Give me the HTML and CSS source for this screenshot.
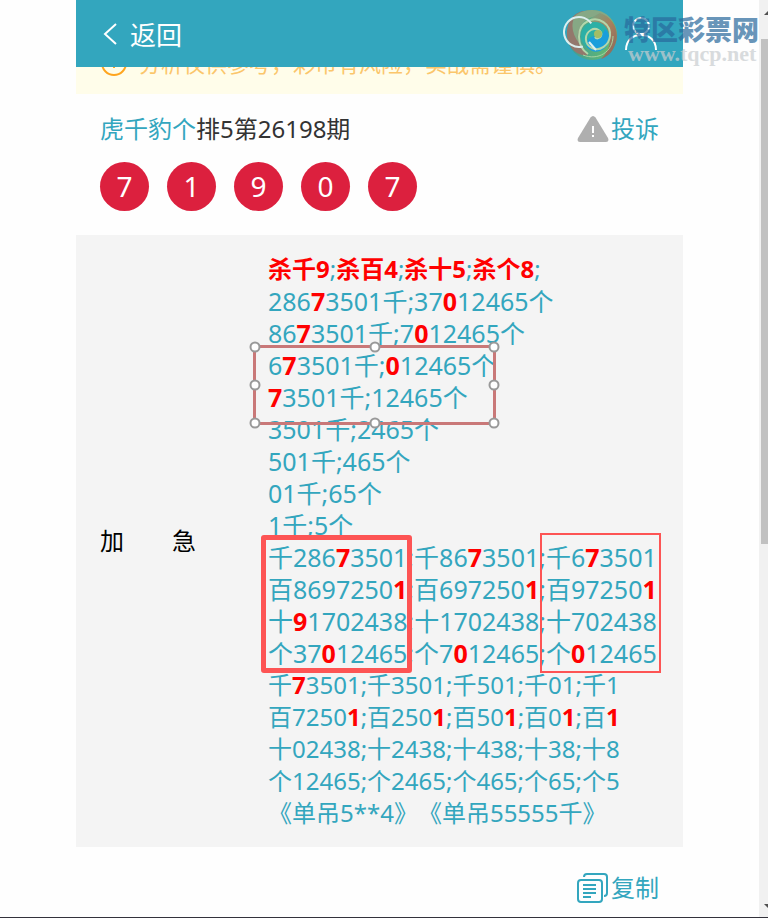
FILE: index.html
```html
<!DOCTYPE html>
<html lang="zh-CN">
<head>
  <meta charset="utf-8">
  <title>排5第26198期</title>
  <link rel="stylesheet" href="styles.css">
</head>
<body>

  <div class="window">
    <div class="page">
      <header class="topbar">
        <a class="back" href="#">
          <svg width="14" height="22" viewBox="0 0 14 22" fill="none" stroke="#fff" stroke-width="2"><path d="M13 1L2 11l11 10"/></svg>
          返回
        </a>
        <button class="user" aria-label="我的">
          <svg width="32" height="34" viewBox="0 0 32 34" fill="none" stroke="#fff" stroke-width="2"><circle cx="16" cy="9" r="8"/><path d="M1 33c0-10 7-15 15-15s15 5 15 15"/></svg>
        </button>
        <div class="watermark">
          <svg width="56" height="54" viewBox="0 0 56 54" fill="none">
            <defs>
              <linearGradient id="warm" x1="0" y1="0" x2="1" y2="1">
                <stop offset="0" stop-color="#6fae8c"/>
                <stop offset="0.5" stop-color="#a8805e"/>
                <stop offset="1" stop-color="#84685c"/>
              </linearGradient>
              <linearGradient id="green" x1="0" y1="0" x2="1" y2="0">
                <stop offset="0" stop-color="#3d9a9a"/>
                <stop offset="1" stop-color="#6cc068"/>
              </linearGradient>
            </defs>
            <circle cx="29" cy="27" r="25" fill="url(#green)"/>
            <path d="M8 11C1 22 3 38 14 45c4 2 8 3 11 2-9-7-12-20-7-30 3-6 9-10 16-11C24 0 14 3 8 11z" fill="#93786c"/>
            <path d="M13 7C24-1 43 0 50 14c-8-7-20-8-28-1-6 5-9 14-6 22-7-9-9-20-3-28z" fill="#86a885"/>
            <path d="M37 5c15 5 20 20 15 32-3 8-8 12-14 14 8-8 11-18 7-27C41 16 32 12 24 15c3-5 9-8 13-10z" fill="url(#warm)"/>
            <circle cx="32" cy="28" r="14" fill="#2cb0a6"/>
            <path d="M24 39c-1-7 3-11 9-11 5 0 8-3 9-7 7 6 5 17-3 21-5 3-11 2-15-3z" fill="#1a9edb"/>
            <path d="M25 46C13 38 13 19 25 13c11-5 23 3 22 15-1 9-10 16-18 12-8-4-8-14-1-18 5-3 12 1 10 6-1 3-5 3-6 1" stroke="#b4d6aa" stroke-width="2"/>
            <path d="M20 47c15 6 30-3 30-19" stroke="#a9d3a0" stroke-width="1"/>
            <circle cx="35" cy="26" r="4" fill="#a3bd65"/>
            <circle cx="16" cy="24" r="15" stroke="#dcefef" stroke-width="2" stroke-dasharray="65 30" transform="rotate(75 16 24)"/>
            <path d="M26 34l7 8" stroke="#dcefef" stroke-width="2"/>
          </svg>
          <div class="brand">
            <strong>特区彩票网</strong>
            <span>www.tqcp.net</span>
          </div>
        </div>
      </header>

      <div class="notice">
        <svg width="28" height="28" viewBox="0 0 28 28" fill="none" stroke="#ffa51e" stroke-width="2"><circle cx="14" cy="14" r="12"/><path d="M14 7v2M14 12v7"/></svg>
        <span>分析仅供参考，彩市有风险，实战需谨慎。</span>
      </div>

      <section class="issue">
        <div class="issue-title">
          <h1><a href="#">虎千豹个</a>排5第26198期</h1>
          <button class="action">
            <svg width="32" height="26" viewBox="0 0 32 26"><path d="M13.500 1.500q2.500-3 5 0L31 22q1.500 4-2 4H3q-3.500 0-2-4z" fill="#afafaf"/><path d="M16 10v7M16 19v2" stroke="#fff" stroke-width="2"/></svg>
            投诉
          </button>
        </div>
        <div class="balls">
          <span>7</span><span>1</span><span>9</span><span>0</span><span>7</span>
        </div>
      </section>

      <section class="plan">
        <div class="author"><span>加</span><span>急</span></div>
        <div class="detail">
          <p><b>杀千9</b>;<b>杀百4</b>;<b>杀十5</b>;<b>杀个8</b>;</p>
          <div class="numbers">
            <p>286<b>7</b>3501千;37<b>0</b>12465个</p>
            <p>86<b>7</b>3501千;7<b>0</b>12465个</p>
            <p>6<b>7</b>3501千;<b>0</b>12465个</p>
            <p><b>7</b>3501千;12465个</p>
            <p>3501千;2465个</p>
            <p>501千;465个</p>
            <p>01千;65个</p>
            <p>1千;5个</p>
            <p>千286<b>7</b>3501;千86<b>7</b>3501;千6<b>7</b>3501</p>
            <p>百8697250<b>1</b>;百697250<b>1</b>;百97250<b>1</b></p>
            <p>十<b>9</b>1702438;十1702438;十702438</p>
            <p>个37<b>0</b>12465;个7<b>0</b>12465;个<b>0</b>12465</p>
          </div>
          <p>千<b>7</b>3501;千3501;千501;千01;千1</p>
          <p>百7250<b>1</b>;百250<b>1</b>;百50<b>1</b>;百0<b>1</b>;百<b>1</b></p>
          <p>十02438;十2438;十438;十38;十8</p>
          <p>个12465;个2465;个465;个65;个5</p>
          <p>《单吊5**4》《单吊55555千》</p>

          <div class="mark mark-selected">
            <i></i><i></i><i></i><i></i><i></i><i></i><i></i><i></i>
          </div>
          <div class="mark mark-thick"></div>
          <div class="mark mark-thin"></div>
        </div>
      </section>

      <div class="footer">
        <button class="action">
          <svg width="32" height="30" viewBox="0 0 32 30" fill="none" stroke="#33a6be" stroke-width="2"><rect x="1" y="7" width="24" height="22" rx="3"/><path d="M7 4q0-3 3-3h17q3 0 3 3v16q0 3-3 3M6 12h13M6 16h13M6 20h13M6 24h8"/></svg>
          复制
        </button>
      </div>
    </div>

    <div class="scrollbar">
      <svg width="7" height="5" viewBox="0 0 7 5" fill="#505050"><path d="M3 5l4-4v4z"/></svg>
      <div class="thumb"></div>
      <svg width="7" height="5" viewBox="0 0 7 5" fill="#505050"><path d="M3 0h4v4z"/></svg>
    </div>
  </div>

</body>
</html>
```
FILE: styles.css
```css
* {
  box-sizing: border-box;
}

body {
  margin: 0;
  background-color: #fefefe;
  font-family: "Noto Sans", "Noto Sans CJK SC", sans-serif;
  font-size: 24px;
  color: #333;
  text-spacing-trim: space-all;
}

h1, p {
  margin: 0;
  font-size: inherit;
  font-weight: normal;
}

a {
  color: #33a6be;
  text-decoration: none;
}

button {
  padding: 0;
  border: none;
  background: none;
  font: inherit;
  color: #33a6be;
}

svg {
  display: block;
  flex: none;
}

.window {
  display: flex;
  min-height: 100vh;
  border-bottom: 1px solid #33323c;
}

.page {
  flex: 1;
  padding: 0 76px;
}

.topbar {
  position: relative;
  display: flex;
  justify-content: space-between;
  align-items: center;
  height: 67px;
  padding: 0 26px 0 27px;
  background-color: #33a6be;
}

.back {
  display: flex;
  align-items: center;
  gap: 13px;
  font-size: 26px;
  color: #fff;
}

.watermark {
  position: absolute;
  top: 8px;
  right: -76px;
  display: flex;
  gap: 5px;
}

.brand {
  display: flex;
  flex-direction: column;
  padding-top: 8px;
}

.brand strong {
  font-size: 27px;
  font-weight: 900;
  line-height: 28px;
  color: #296a9c;
  opacity: 0.7;
}

.brand span {
  padding-left: 4px;
  font-family: "Liberation Serif", serif;
  font-size: 22px;
  font-weight: bold;
  line-height: 20px;
  color: #c9cdd0;
  opacity: 0.7;
}

.notice {
  display: flex;
  align-items: flex-end;
  gap: 11px;
  height: 27px;
  padding: 0 24px 17px;
  overflow: hidden;
  background-color: #fffdea;
  font-size: 22px;
  line-height: 28px;
  color: #fbc66b;
}

.notice span {
  white-space: nowrap;
}

.issue {
  padding: 17px 24px 24px;
}

.issue-title {
  display: flex;
  justify-content: space-between;
  line-height: 36px;
}

.action {
  display: flex;
  align-items: center;
  gap: 2px;
  line-height: 36px;
}

.balls {
  display: flex;
  gap: 18px;
  margin-top: 15px;
}

.balls span {
  width: 49px;
  height: 49px;
  border-radius: 50%;
  background-color: #dc203e;
  font-size: 28px;
  line-height: 49px;
  text-align: center;
  color: #fff;
}

.plan {
  display: flex;
  align-items: center;
  padding: 18px 24px;
  background-color: #f4f4f4;
}

.author {
  display: flex;
  gap: 48px;
  width: 168px;
  line-height: 32px;
  color: #000;
}

.detail {
  position: relative;
  flex: 1;
  line-height: 32px;
  white-space: nowrap;
  color: #33a6be;
}

.detail b {
  color: #f00;
}

.numbers {
  font-size: 25px;
}

.mark {
  position: absolute;
  border: 2px solid #fd5454;
}

.mark-selected {
  top: 92px;
  left: -15px;
  width: 243px;
  height: 80px;
  border: 3px solid #c97878;
}

.mark-selected i {
  position: absolute;
  width: 11px;
  height: 11px;
  border: 2px solid #999;
  border-radius: 50%;
  background-color: #fff;
  transform: translate(-50%, -50%);
}

.mark-selected i:nth-child(-n+3) { top: -1px; }
.mark-selected i:nth-child(n+4) { top: 50%; }
.mark-selected i:nth-child(n+6) { top: calc(100% + 1px); }
.mark-selected i:nth-child(1), .mark-selected i:nth-child(4), .mark-selected i:nth-child(6) { left: -1px; }
.mark-selected i:nth-child(2), .mark-selected i:nth-child(7) { left: 50%; }
.mark-selected i:nth-child(3), .mark-selected i:nth-child(5), .mark-selected i:nth-child(8) { left: calc(100% + 1px); }

.mark-thick {
  top: 282px;
  left: -7px;
  width: 151px;
  height: 138px;
  border-width: 5px;
  border-radius: 3px;
}

.mark-thin {
  top: 280px;
  left: 272px;
  width: 121px;
  height: 140px;
}

.footer {
  display: flex;
  justify-content: flex-end;
  padding: 23px 24px 0;
}

.scrollbar {
  display: flex;
  flex-direction: column;
  width: 9px;
  padding: 10px 0 8px 2px;
  background-color: #f1f1f1;
}

.thumb {
  height: 55vh;
  margin: 24px 0 auto;
  background-color: #c1c1c1;
}
```
